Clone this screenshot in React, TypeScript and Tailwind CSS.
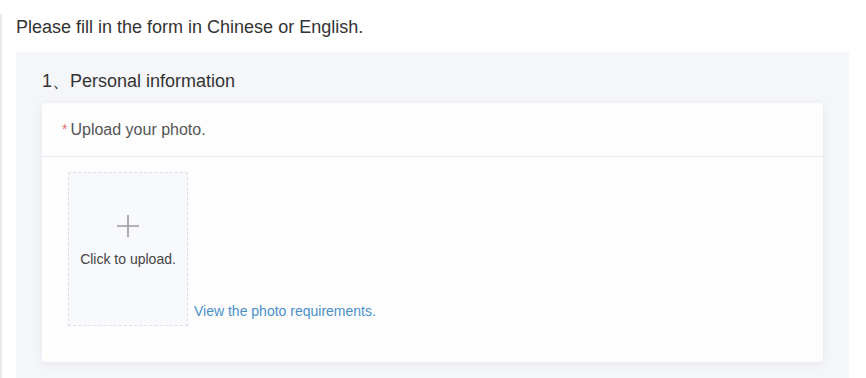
export default function App() {
  return (
    <div className="w-[866px] h-[378px] bg-white pt-[14px] overflow-hidden font-['Liberation_Sans',Arial,sans-serif]">
      <div className="h-full border-l-2 border-[#e9e9e9] pl-[14px] pr-[17px]">
        {/* Heading */}
        <h1 className="text-[18px] leading-[26px] text-[#333] mb-[12px]">Please fill in the form in Chinese or English.</h1>

        {/* Section panel */}
        <div className="h-full bg-[#f5f6fa] px-[26px] pt-[16px]">
          <h2 className="text-[18px] leading-[26px] text-[#333] mb-[9px]">1、Personal information</h2>

          <div className="bg-[#fdfdfe] rounded-[4px] shadow-[0_2px_10px_rgba(40,50,90,0.08)]">
            {/* Card header */}
            <div className="h-[54px] flex items-center px-[20px] border-b border-[#e8eaf0]">
              <span className="text-[#e46f6f] text-[14px] mr-[3px]">*</span>
              <span className="text-[16px] text-[#555]">Upload your photo.</span>
            </div>

            {/* Card body */}
            <div className="pl-[26px] pt-[15px] pb-[36px] flex items-end gap-[6px]">
              <div className="w-[120px] h-[154px] border border-dashed border-[#dcdfe6] bg-[#f8f9fd] flex flex-col items-center justify-center pb-[17px]">
                <svg width="24" height="24" viewBox="0 0 24 24">
                  <path d="M12 1v22M1 12h22" stroke="#9a9a9a" strokeWidth="1.6" fill="none" />
                </svg>
                <span className="mt-[13px] text-[14px] leading-[16px] text-[#444]">Click to upload.</span>
              </div>
              <a className="text-[14px] text-[#4a90c8] leading-[20px] mb-[5px] cursor-pointer">View the photo requirements.</a>
            </div>
          </div>
        </div>
      </div>
    </div>
  )
}
